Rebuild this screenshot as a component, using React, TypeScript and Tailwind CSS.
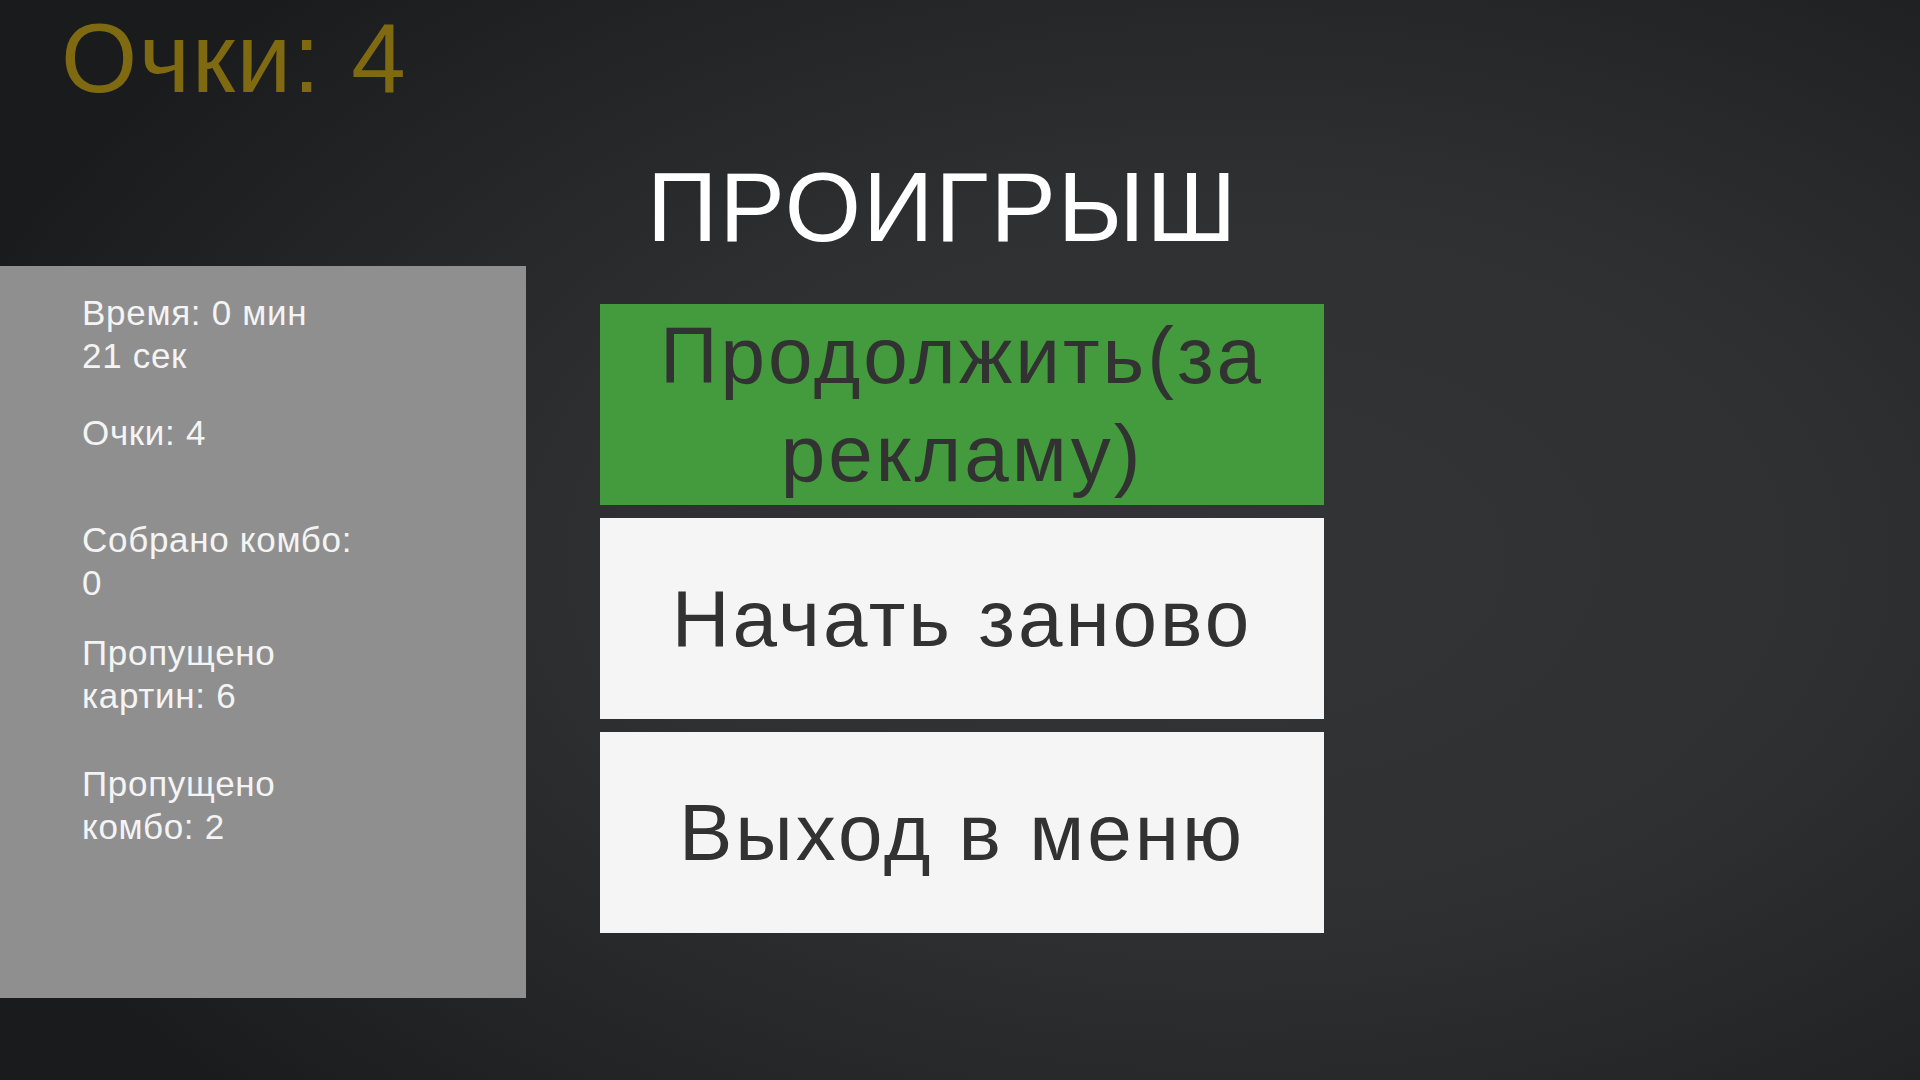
import { type ReactElement } from 'react'

const stats: { lines: string[]; gap: string }[] = [
  { lines: ['Время: 0 мин', '21 сек'], gap: 'mt-[25px]' },
  { lines: ['Очки: 4'], gap: 'mt-[34px]' },
  { lines: ['Собрано комбо:', '0'], gap: 'mt-[64px]' },
  { lines: ['Пропущено', 'картин: 6'], gap: 'mt-[27px]' },
  { lines: ['Пропущено', 'комбо: 2'], gap: 'mt-[45px]' },
]

const buttons: { label: string[]; tone: string }[] = [
  { label: ['Продолжить(за', 'рекламу)'], tone: 'bg-[#439b3e]' },
  { label: ['Начать заново'], tone: 'bg-[#f5f5f5]' },
  { label: ['Выход в меню'], tone: 'bg-[#f5f5f5]' },
]

export default function App(): ReactElement {
  return (
    <div className="w-[1920px] h-[1080px] overflow-hidden font-['Liberation_Sans',Arial,sans-serif] bg-[radial-gradient(ellipse_70%_75%_at_64%_52%,#333436_0%,#2e3032_45%,#232527_75%,#1a1b1d_100%)]">
      {/* Score counter */}
      <div className="pt-[9px] pl-[61px] text-[98px] leading-none tracking-[1.8px] text-[#7f6a12]">Очки: 4</div>

      <div className="flex mt-[51px]">
        {/* Stats panel */}
        <aside className="mt-[108px] w-[526px] h-[732px] bg-[#8f8f8f] pl-[82px] text-[35px] leading-[43px] tracking-[0.7px] text-[#f4f4f4]">
          {stats.map((s, i) => (
            <div key={i} className={s.gap}>
              {s.lines.map((l, j) => (
                <p key={j}>{l}</p>
              ))}
            </div>
          ))}
        </aside>

        {/* Game over menu */}
        <section className="ml-[74px] w-[724px] flex flex-col">
          <h1 className="pl-[47px] text-[98px] leading-none font-normal tracking-[2px] text-white">ПРОИГРЫШ</h1>
          <div className="mt-[48px] flex flex-col gap-[13px]">
            {buttons.map((b) => (
              <button
                key={b.label[0]}
                className={`h-[201px] flex flex-col items-center justify-center text-[80px] leading-[98px] tracking-[3px] text-[#323232] ${b.tone}`}
              >
                {b.label.map((l) => (
                  <span key={l}>{l}</span>
                ))}
              </button>
            ))}
          </div>
        </section>
      </div>
    </div>
  )
}
